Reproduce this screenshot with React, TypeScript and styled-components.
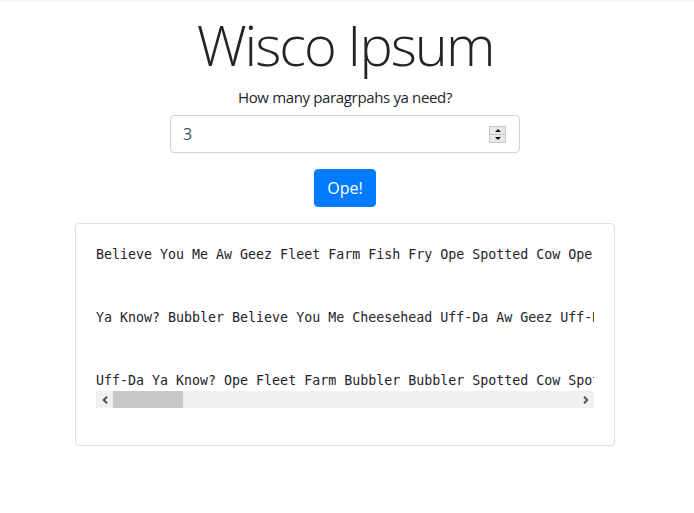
import React, {useLayoutEffect, useRef, useState} from 'react'
import styled, {createGlobalStyle} from 'styled-components'

const WORDS = [
    'Ope', 'Uff-Da', 'Ya Know?', 'Bubbler', 'Believe You Me', 'Aw Geez', 'Fleet Farm',
    'Fish Fry', 'Spotted Cow', 'Cheesehead', 'Supper Club', 'Kwik Trip', 'Cheese Curds',
    'Up Nort', 'Hotdish', 'Booyah', 'Brandy Old Fashioned', 'Stop-and-go Light', 'Brat',
]

// pads a starting phrase out to a long single line, like the generator does
const makeParagraph = (start: string, seed: number, maxLength = 412): string => {
    let text = start
    let i = seed
    for (;;) {
        i = (i * 7 + 3) % WORDS.length
        const next = text + ' ' + WORDS[i]
        if (next.length > maxLength) break
        text = next
    }
    return text
}

const PARAGRAPHS = [
    makeParagraph('Believe You Me Aw Geez Fleet Farm Fish Fry Ope Spotted Cow Ope', 2),
    makeParagraph('Ya Know? Bubbler Believe You Me Cheesehead Uff-Da Aw Geez Uff-Da', 5),
    makeParagraph('Uff-Da Ya Know? Ope Fleet Farm Bubbler Bubbler Spotted Cow Spotted Cow', 11),
]

const ARROW_SIZE = 17

const GlobalStyle = createGlobalStyle`
  body {
    margin: 0;
    background: #fff;
    color: #212529;
    font-family: "Open Sans", "Noto Sans", sans-serif;
    font-size: 16px;
    line-height: 1.5;
  }
`

const Page = styled.div`
  border-top: 1px solid #f6f6f6;
  padding: 0 4px 0 0;
`

const Container = styled.div`
  width: 540px;
  margin: 0 auto;
  display: flex;
  flex-direction: column;
  align-items: center;
`

const Title = styled.h1`
  margin: 10px 0 7px;
  font-size: 56px;
  font-weight: 300;
  line-height: 1.2;
  letter-spacing: -2px;
  color: #212529;
`

const Label = styled.label`
  display: block;
  font-size: 15px;
  line-height: 24px;
  letter-spacing: -0.35px;
  margin-bottom: 6px;
`

const InputBox = styled.div`
  box-sizing: border-box;
  width: 350px;
  height: 38px;
  display: flex;
  align-items: center;
  padding: 0 13px 0 12px;
  border: 1px solid #ced4da;
  border-radius: 4px;
  background: #fff;
`

const NumberInput = styled.input`
  flex: 1;
  min-width: 0;
  padding: 0;
  border: none;
  font-family: "Open Sans", "Noto Sans", sans-serif;
  font-size: 16px;
  color: #495057;
  background: transparent;
  outline: none;
  appearance: textfield;

  &::-webkit-inner-spin-button,
  &::-webkit-outer-spin-button {
    -webkit-appearance: none;
    margin: 0;
  }
`

const Stepper = styled.div`
  display: flex;
  flex-direction: column;
  width: 15px;
  border: 1px solid #c6c6c6;
  background: #c6c6c6;
  gap: 1px;
`

const StepButton = styled.button<{$dir: 'up' | 'down'}>`
  height: 7px;
  padding: 0;
  border: none;
  background: #e9e9e9;
  display: flex;
  align-items: center;
  justify-content: center;
  cursor: pointer;

  &::after {
    content: '';
    width: 0;
    height: 0;
    border-left: 3px solid transparent;
    border-right: 3px solid transparent;
    ${(p) => p.$dir === 'up' ? 'border-bottom: 3px solid #111;' : 'border-top: 3px solid #111;'}
  }
`

const Button = styled.button`
  margin-top: 16px;
  height: 38px;
  padding: 6px 12px;
  border: 1px solid #007bff;
  border-radius: 4px;
  background: #007bff;
  color: #fff;
  font-family: "Open Sans", "Noto Sans", sans-serif;
  font-size: 16px;
  line-height: 1.5;
  cursor: pointer;
`

const Card = styled.div`
  box-sizing: border-box;
  width: 540px;
  margin-top: 16px;
  padding: 20px 20px 37px;
  border: 1px solid #dfdfdf;
  border-radius: 4px;
`

const Output = styled.pre`
  margin: 0;
  font-family: "DejaVu Sans Mono", "Liberation Mono", monospace;
  font-size: 13.3px;
  line-height: 21px;
  color: #212529;
  overflow-x: auto;
  scrollbar-width: none;

  &::-webkit-scrollbar {
    display: none;
  }
`

const ScrollBar = styled.div`
  display: flex;
  height: ${ARROW_SIZE}px;
  background: #f0f0f0;
`

const ScrollArrow = styled.button`
  flex: 0 0 ${ARROW_SIZE}px;
  padding: 0;
  border: none;
  background: transparent;
  color: #505050;
  display: flex;
  align-items: center;
  justify-content: center;
  cursor: pointer;
`

const Track = styled.div`
  flex: 1;
  position: relative;
`

const Thumb = styled.div`
  position: absolute;
  top: 0;
  bottom: 0;
  background: #c8c8c8;
`

const Chevron: React.FC<{flip?: boolean}> = ({flip}) => (
    <svg width="6" height="8" viewBox="0 0 6 8" style={flip ? {transform: 'scaleX(-1)'} : undefined}>
        <polyline points="5,0.8 1.7,4 5,7.2" fill="none" stroke="currentColor" strokeWidth="1.9"/>
    </svg>
)

const App: React.FC = () => {
    const [count, setCount] = useState(3)
    const outputRef = useRef<HTMLPreElement>(null)
    const [thumb, setThumb] = useState({width: 70, left: 0})

    const updateThumb = () => {
        const el = outputRef.current
        if (!el) return
        const track = el.clientWidth - ARROW_SIZE * 2
        const width = Math.max(20, track * el.clientWidth / el.scrollWidth)
        const max = el.scrollWidth - el.clientWidth
        const left = max > 0 ? (track - width) * el.scrollLeft / max : 0
        setThumb({width, left})
    }

    useLayoutEffect(updateThumb, [count])

    const scrollBy = (dx: number) => outputRef.current?.scrollBy({left: dx})

    return (
        <Page>
            <GlobalStyle/>
            <Container>
                <Title>Wisco Ipsum</Title>
                <Label htmlFor="count">How many paragrpahs ya need?</Label>
                <InputBox>
                    <NumberInput
                        id="count"
                        type="number"
                        min={1}
                        value={count}
                        onChange={(e) => setCount(Number(e.target.value))}
                    />
                    <Stepper>
                        <StepButton $dir="up" aria-label="increase" onClick={() => setCount(count + 1)}/>
                        <StepButton $dir="down" aria-label="decrease" onClick={() => setCount(Math.max(1, count - 1))}/>
                    </Stepper>
                </InputBox>
                <Button>Ope!</Button>
                <Card>
                    <Output ref={outputRef} onScroll={updateThumb}>
                        {PARAGRAPHS.slice(0, count).join('\n\n\n')}
                    </Output>
                    <ScrollBar>
                        <ScrollArrow aria-label="scroll left" onClick={() => scrollBy(-40)}>
                            <Chevron/>
                        </ScrollArrow>
                        <Track>
                            <Thumb style={{width: thumb.width, left: thumb.left}}/>
                        </Track>
                        <ScrollArrow aria-label="scroll right" onClick={() => scrollBy(40)}>
                            <Chevron flip/>
                        </ScrollArrow>
                    </ScrollBar>
                </Card>
            </Container>
        </Page>
    )
}

export default App
